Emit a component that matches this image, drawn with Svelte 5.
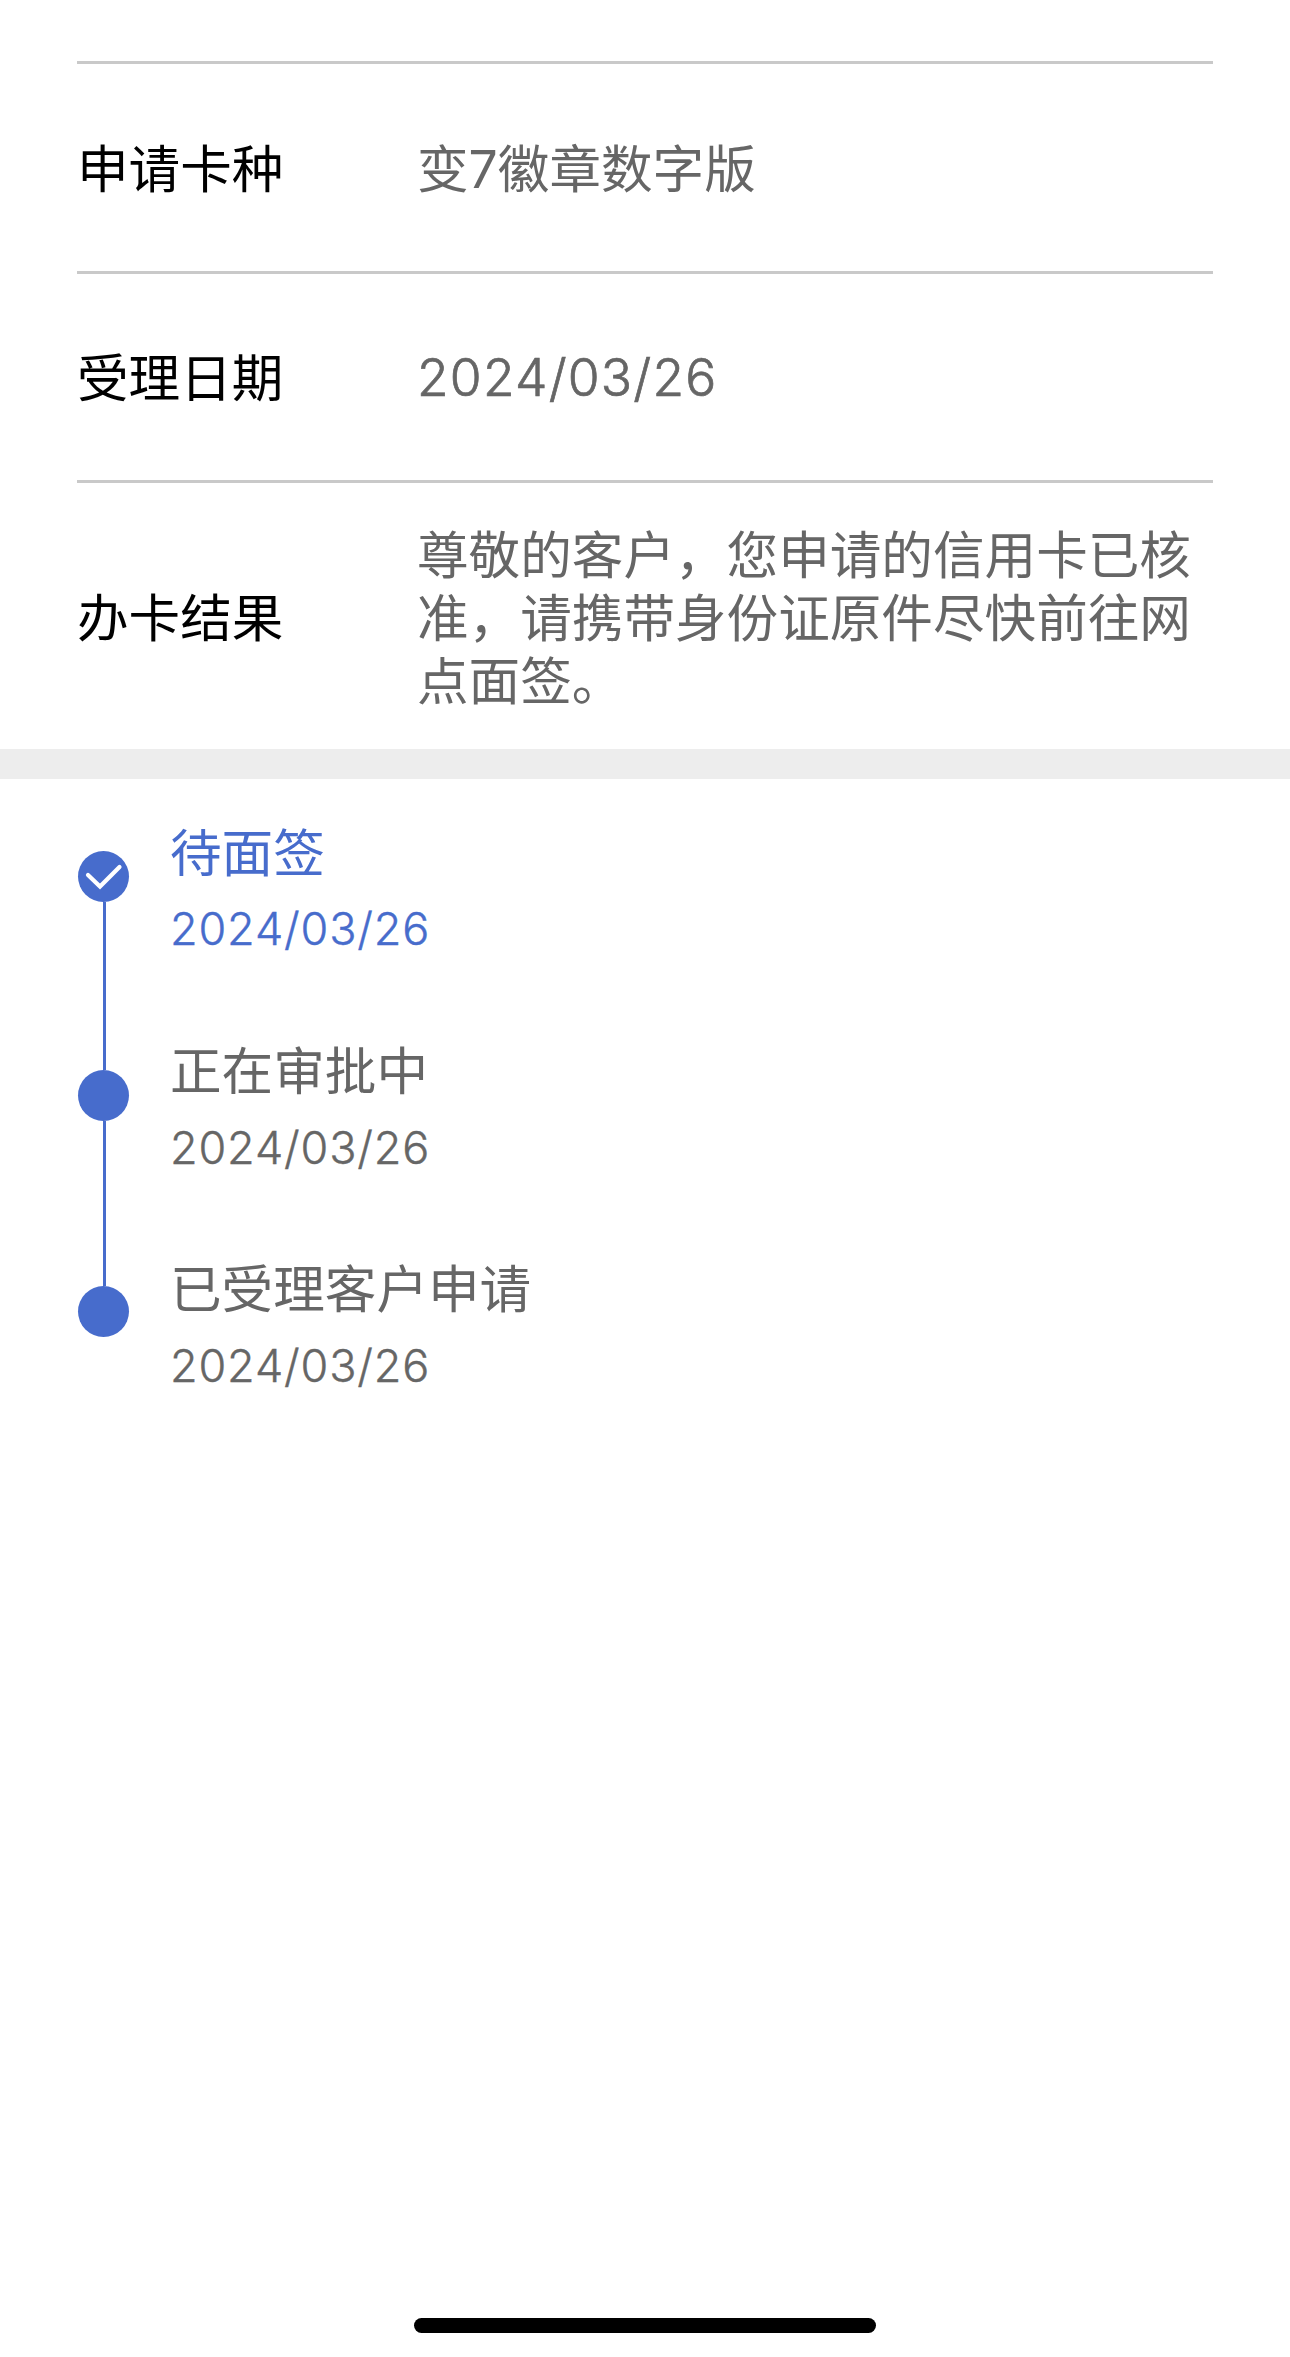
<script>
  const rows = [
    { label: '申请卡种', value: '变7徽章数字版' },
    { label: '受理日期', value: '2024/03/26', date: true },
    { label: '办卡结果', value: '尊敬的客户，您申请的信用卡已核准，请携带身份证原件尽快前往网点面签。', long: true },
  ];

  const steps = [
    { title: '待面签', date: '2024/03/26', active: true },
    { title: '正在审批中', date: '2024/03/26' },
    { title: '已受理客户申请', date: '2024/03/26' },
  ];
</script>

<main>
  <section class="details">
    {#each rows as row}
      <div class="row" class:long={row.long}>
        <span class="label">{row.label}</span>
        <span class="value" class:date={row.date}>{row.value}</span>
      </div>
    {/each}
  </section>

  <div class="divider"></div>

  <ol class="timeline">
    {#each steps as step, i}
      <li class="step" class:active={step.active}>
        <div class="rail">
          <span class="dot">
            {#if step.active}
              <svg viewBox="0 0 51 51"><path d="M10 24 L22 35.5 L41.5 16" /></svg>
            {/if}
          </span>
          {#if i < steps.length - 1}<span class="line"></span>{/if}
        </div>
        <div class="info">
          <p class="title">{step.title}</p>
          <p class="time">{step.date}</p>
        </div>
      </li>
    {/each}
  </ol>

  <div class="home-bar"></div>
</main>

<style>
  :global(body) { background: #fff; }

  main {
    display: flex;
    flex-direction: column;
    height: 2357px;
    box-sizing: border-box;
    padding-top: 61px;
    color: #666;
    font-family: Inter, 'Noto Sans CJK SC', sans-serif;
  }

  .details { padding: 0 77px; }
  .row {
    display: flex;
    align-items: center;
    height: 209px;
    box-sizing: border-box;
    padding-top: 2px;
    border-top: 3px solid #c9c9c9;
  }
  .row:first-child { height: 210px; padding-top: 4px; }
  .row.long { height: 269px; padding-top: 5px; }
  .label { width: 340px; flex-shrink: 0; font-size: 51.6px; line-height: 63px; color: #000; }
  .value { width: 780px; flex-shrink: 0; font-size: 51.6px; line-height: 63px; }
  .value.date {
    margin-top: -2px;
    font-weight: 300;
    letter-spacing: 1.2px;
    -webkit-text-stroke: 0.7px currentColor;
  }

  .divider { height: 30px; flex-shrink: 0; background: #ededed; }

  .timeline { list-style: none; margin: 0; padding: 72px 77px 0 78px; }
  .step { display: flex; height: 219px; }
  .step:nth-child(2) { height: 216px; }
  .rail { display: flex; flex-direction: column; width: 51px; }
  .dot {
    width: 51px;
    height: 51px;
    flex-shrink: 0;
    border-radius: 50%;
    background: #476ccc;
  }
  .dot svg {
    display: block;
    fill: none;
    stroke: #fff;
    stroke-width: 4.2;
    stroke-linecap: round;
  }
  .line { width: 3px; flex: 1; margin-left: 25px; background: #476ccc; }
  .info { margin: -38px 0 0 41px; }
  .step:nth-child(2) .info { margin-top: -39px; }
  .step:nth-child(3) .info { margin-top: -37px; }
  .title { margin: 0; font-size: 51.6px; line-height: 80px; }
  .time {
    margin: 0;
    font-size: 45px;
    font-weight: 300;
    line-height: 73px;
    letter-spacing: 0.85px;
    -webkit-text-stroke: 0.4px currentColor;
  }
  .active .info { color: #476ccc; }
  .active .time { line-height: 71px; }

  .home-bar {
    width: 462px;
    height: 15px;
    margin: auto auto 24px;
    border-radius: 8px;
    background: #000;
  }
</style>
